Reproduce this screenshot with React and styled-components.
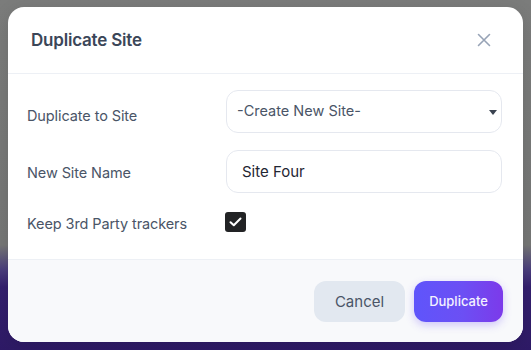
import React from "react";
import styled, { createGlobalStyle } from "styled-components";

const GlobalStyle = createGlobalStyle`
  html, body {
    margin: 0;
    height: 100%;
  }
  body {
    font-family: Inter, "Liberation Sans", sans-serif;
    background: linear-gradient(180deg, #7b7c7b 0%, #767776 70%, #4b3f7d 77%, #34206f 82%, #2e1a66 100%);
  }
  #root {
    padding: 7px 8px;
  }
`;

const Modal = styled.div`
  width: 515px;
  height: 335px;
  background: #fff;
  border-radius: 16px;
  overflow: hidden;
  display: flex;
  flex-direction: column;
  box-shadow: 0 4px 18px rgba(0, 0, 0, 0.12);
`;

const Header = styled.div`
  height: 66px;
  display: flex;
  align-items: center;
  justify-content: space-between;
  padding: 0 32px 0 23px;
  border-bottom: 1px solid #edf0f5;
`;

const Title = styled.h2`
  margin: 0;
  font-size: 17px;
  font-weight: 600;
  color: #3b4658;
  letter-spacing: -0.2px;
`;

const CloseButton = styled.button`
  border: none;
  background: none;
  padding: 0;
  display: flex;
  color: #97a3b6;
  cursor: pointer;
`;

const Body = styled.div`
  flex: 1;
  display: flex;
  flex-direction: column;
  gap: 17px;
  padding: 16px 21px 0 19px;
`;

const Row = styled.div`
  display: grid;
  grid-template-columns: 199px 1fr;
  align-items: center;
`;

const Label = styled.label`
  font-size: 14.5px;
  color: #4a5567;
  letter-spacing: -0.1px;
  padding-top: ${(p) => p.$offset || 0}px;
`;

const SelectBox = styled.div`
  position: relative;
  height: 43px;
  border: 1px solid #e5e8ef;
  border-radius: 12px;
  display: flex;
  align-items: center;
  padding: 0 16px 3px 10px;
  box-sizing: border-box;
  font-size: 14.5px;
  color: #4a5567;
`;

const Caret = styled.span`
  position: absolute;
  right: 4px;
  top: 19px;
  width: 0;
  height: 0;
  border-left: 4px solid transparent;
  border-right: 4px solid transparent;
  border-top: 5px solid #3a4250;
`;

const TextInput = styled.input`
  width: 100%;
  height: 43px;
  border: 1px solid #e5e8ef;
  border-radius: 12px;
  padding: 0 15px;
  box-sizing: border-box;
  font-family: Inter, "Liberation Sans", sans-serif;
  font-size: 15px;
  color: #1f2633;
  outline: none;
`;

const CheckBox = styled.span`
  width: 21px;
  height: 20px;
  margin: 2px 0 0 -1px;
  border-radius: 3px;
  background: #222325;
  display: flex;
  align-items: center;
  justify-content: center;
`;

const Footer = styled.div`
  height: 82px;
  background: #f8f9fb;
  border-top: 1px solid #edf0f5;
  display: flex;
  align-items: center;
  justify-content: flex-end;
  gap: 9px;
  padding: 0 20px;
`;

const Button = styled.button`
  height: 41px;
  border: none;
  border-radius: 12px;
  font-family: Inter, "Liberation Sans", sans-serif;
  cursor: pointer;
  padding: 0;
  width: ${(p) => (p.$primary ? 89 : 91)}px;
  font-size: ${(p) => (p.$primary ? 13 : 15)}px;
  font-weight: ${(p) => (p.$primary ? 500 : 400)};
  color: ${(p) => (p.$primary ? "#f3f1ff" : "#4a5567")};
  background: ${(p) =>
    p.$primary ? "linear-gradient(90deg, #5f55fb 0%, #6c4ff4 55%, #7c3aea 100%)" : "#e2e8f0"};
  box-shadow: ${(p) => (p.$primary ? "0 3px 8px rgba(108, 79, 244, 0.3)" : "none")};
`;

export default function App() {
  return (
    <>
      <GlobalStyle />
      <Modal>
        <Header>
          <Title>Duplicate Site</Title>
          <CloseButton aria-label="close">
            <svg width="14" height="14" viewBox="0 0 14 14" fill="none" stroke="currentColor" strokeWidth="1.6" strokeLinecap="round">
              <path d="M1.5 1.5l11 11M12.5 1.5l-11 11" />
            </svg>
          </CloseButton>
        </Header>
        <Body>
          <Row>
            <Label $offset={8}>Duplicate to Site</Label>
            <SelectBox>
              -Create New Site-
              <Caret />
            </SelectBox>
          </Row>
          <Row>
            <Label $offset={2}>New Site Name</Label>
            <TextInput defaultValue="Site Four" />
          </Row>
          <Row>
            <Label $offset={4}>Keep 3rd Party trackers</Label>
            <CheckBox>
              <svg width="13" height="10" viewBox="0 0 13 10" fill="none" stroke="#fff" strokeWidth="2" strokeLinecap="round" strokeLinejoin="round">
                <path d="M1.5 5.2l3.3 3.1L11.5 1.5" />
              </svg>
            </CheckBox>
          </Row>
        </Body>
        <Footer>
          <Button>Cancel</Button>
          <Button $primary>Duplicate</Button>
        </Footer>
      </Modal>
    </>
  );
}
